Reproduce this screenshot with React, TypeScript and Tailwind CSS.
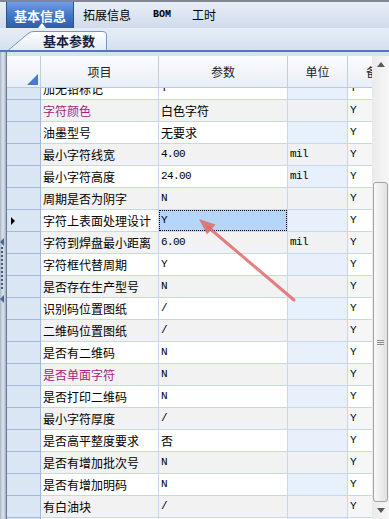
import React from "react";

type Row = { item: string; param: string; unit: string; y: string; magenta?: boolean; selected?: boolean };

const rows: Row[] = [
  { item: "加无铅标记", param: "Y", unit: "", y: "Y" },
  { item: "字符颜色", param: "白色字符", unit: "", y: "Y", magenta: true },
  { item: "油墨型号", param: "无要求", unit: "", y: "Y" },
  { item: "最小字符线宽", param: "4.00", unit: "mil", y: "Y" },
  { item: "最小字符高度", param: "24.00", unit: "mil", y: "Y" },
  { item: "周期是否为阴字", param: "N", unit: "", y: "Y" },
  { item: "字符上表面处理设计", param: "Y", unit: "", y: "Y", selected: true },
  { item: "字符到焊盘最小距离", param: "6.00", unit: "mil", y: "Y" },
  { item: "字符框代替周期", param: "Y", unit: "", y: "Y" },
  { item: "是否存在生产型号", param: "N", unit: "", y: "Y" },
  { item: "识别码位置图纸", param: "/", unit: "", y: "Y" },
  { item: "二维码位置图纸", param: "/", unit: "", y: "Y" },
  { item: "是否有二维码", param: "N", unit: "", y: "Y" },
  { item: "是否单面字符", param: "N", unit: "", y: "Y", magenta: true },
  { item: "是否打印二维码", param: "N", unit: "", y: "Y" },
  { item: "最小字符厚度", param: "/", unit: "", y: "Y" },
  { item: "是否高平整度要求", param: "否", unit: "", y: "Y" },
  { item: "是否有增加批次号", param: "N", unit: "", y: "Y" },
  { item: "是否有增加明码", param: "N", unit: "", y: "Y" },
  { item: "有白油块", param: "/", unit: "", y: "Y" },
  { item: "", param: "", unit: "", y: "" },
];

const isAscii = (s: string) => /^[\x00-\x7f]*$/.test(s);

function Val({ text }: { text: string }) {
  if (!text) return null;
  if (isAscii(text)) {
    return <span className="font-['Liberation_Mono',monospace] text-[11px] tracking-[-0.6px] text-black">{text}</span>;
  }
  return <span className="text-[12px] text-black">{text}</span>;
}

export default function App() {
  return (
    <div className="relative w-[389px] h-[519px] overflow-hidden bg-white font-['Noto_Sans_CJK_SC','Noto_Sans',sans-serif] leading-none select-none">
      {/* top tab bar */}
      <div className="h-[28px] flex items-stretch border-t-2 border-[#7f8892] bg-linear-to-b from-[#e8eef7] to-[#d0dbeb]">
        <div className="relative ml-[6px] w-[68px] flex items-center justify-center bg-linear-to-b from-[#6f9fe2] via-[#4279c6] to-[#2d5da9] border-x border-[#2a5190] text-white font-bold text-[13px]">
          基本信息
          <div className="absolute bottom-0 left-[31px] w-0 h-0 border-l-[4px] border-r-[4px] border-b-[5px] border-l-transparent border-r-transparent border-b-white" />
        </div>
        <div className="ml-[9px] self-center text-[12px] text-black">拓展信息</div>
        <div className="ml-[22px] self-center font-['Liberation_Mono',monospace] font-bold text-[10px] text-black">BOM</div>
        <div className="ml-[21px] self-center text-[12px] text-black">工时</div>
      </div>

      {/* sub tab band */}
      <div className="h-[24px] flex items-end bg-linear-to-b from-[#e6edf7] to-[#d5e0ef] border-b-2 border-[#5279b3]">
        <div className="relative ml-[8px] w-[99px] h-[19px] flex items-center pl-[35px]">
          <svg className="absolute inset-0" width="99" height="19" viewBox="0 0 99 19">
            <defs>
              <linearGradient id="tabg" x1="0" y1="0" x2="0" y2="1">
                <stop offset="0" stopColor="#ffffff" />
                <stop offset="1" stopColor="#e4ecf7" />
              </linearGradient>
            </defs>
            <path d="M0.5,19 L21,1.8 Q23,0.5 26,0.5 L95,0.5 Q98.5,0.5 98.5,4 L98.5,19" fill="url(#tabg)" stroke="#7895bf" strokeWidth="1" />
          </svg>
          <span className="relative font-bold text-[13px] text-[#14213d]">基本参数</span>
        </div>
      </div>

      {/* main */}
      <div className="h-[467px] flex">
        {/* splitter */}
        <div className="relative w-[7px] shrink-0 bg-linear-to-r from-[#aab6c6] via-[#e0e5ec] to-[#a5b2c4] border-r border-[#667b99]">
          <div className="absolute left-0 top-[186px] w-0 h-0 border-t-[4px] border-b-[4px] border-r-[4px] border-t-transparent border-b-transparent border-r-[#4a6792]" />
          <div className="absolute left-[1px] top-[195px] flex flex-col gap-[2px]">
            {Array.from({ length: 11 }).map((_, i) => (
              <div key={i} className="w-[2px] h-[2px] bg-[#3b5a88]" />
            ))}
          </div>
          <div className="absolute left-0 top-[243px] w-0 h-0 border-t-[4px] border-b-[4px] border-r-[4px] border-t-transparent border-b-transparent border-r-[#4a6792]" />
        </div>

        <div className="flex-1 flex flex-col">
          <div className="h-[4px] bg-[#d9e3f0]" />
          <div className="flex-1 flex min-h-0">
            {/* table */}
            <div className="w-[365px] flex flex-col min-h-0">
              {/* header */}
              <div className="h-[32px] flex shrink-0 border-b border-[#b9cbe4] bg-linear-to-b from-[#fbfcfe] to-[#e9eff8]">
                <div className="relative w-[34px] shrink-0 border-r border-[#c3cedd]">
                  <div className="absolute right-[2px] bottom-[2px] w-0 h-0 border-l-[11px] border-b-[11px] border-l-transparent border-b-[#4a7bc9]" />
                </div>
                <div className="w-[118px] shrink-0 border-r border-[#c3cedd] flex items-center justify-center text-[12px] text-[#222]">项目</div>
                <div className="w-[129px] shrink-0 border-r border-[#c3cedd] flex items-center justify-center text-[12px] text-[#222]">参数</div>
                <div className="w-[60px] shrink-0 border-r border-[#c3cedd] flex items-center justify-center text-[12px] text-[#222]">单位</div>
                <div className="w-[24px] shrink-0 overflow-hidden flex items-center">
                  <span className="pl-[18px] whitespace-nowrap text-[12px] text-[#222]">备注</span>
                </div>
              </div>
              {/* body */}
              <div className="flex-1 overflow-hidden">
                <div className="-mt-[10px]">
                  {rows.map((r, i) => {
                    const odd = i % 2 === 1;
                    const base = odd ? "bg-[#f2f2f2]" : "bg-white";
                    const unitBg = odd ? "bg-[#f0f1f3]" : "bg-[#e8f0fb]";
                    return (
                      <div key={i} className="h-[22px] flex">
                        <div className="w-[34px] shrink-0 bg-[#dbe6f5] border-r border-b border-[#a4b9d7] flex items-center pl-[4px]">
                          {r.selected && (
                            <div className="w-0 h-0 border-t-[4px] border-b-[4px] border-l-[4px] border-t-transparent border-b-transparent border-l-black" />
                          )}
                        </div>
                        <div className={`w-[118px] shrink-0 ${base} border-r border-b border-[#c7d7ee] flex items-center pl-[2px] overflow-hidden whitespace-nowrap`}>
                          <span className={`text-[12px] ${r.magenta ? "text-[#a5237c]" : "text-black"}`}>{r.item}</span>
                        </div>
                        <div className={`w-[129px] shrink-0 ${r.selected ? "bg-white" : base} border-r border-b border-[#c7d7ee] flex items-center overflow-hidden whitespace-nowrap`}>
                          {r.selected ? (
                            <div className="w-full h-full bg-[#b5d5f9] border border-dotted border-black flex items-center pl-[1px]">
                              <Val text={r.param} />
                            </div>
                          ) : (
                            <div className="pl-[2px] flex items-center">
                              <Val text={r.param} />
                            </div>
                          )}
                        </div>
                        <div className={`w-[60px] shrink-0 ${unitBg} border-r border-b border-[#c7d7ee] flex items-center pl-[2px]`}>
                          <Val text={r.unit} />
                        </div>
                        <div className={`w-[24px] shrink-0 ${odd ? "bg-[#f6f6f6]" : "bg-white"} border-b border-[#c7d7ee] flex items-center pl-[2px]`}>
                          <Val text={r.y} />
                        </div>
                      </div>
                    );
                  })}
                </div>
              </div>
            </div>

            {/* scrollbar */}
            <div className="w-[17px] shrink-0 flex flex-col bg-linear-to-r from-[#eaeaea] to-[#f7f7f7]">
              <div className="h-[17px] flex items-center justify-center">
                <div className="w-0 h-0 border-l-[4px] border-r-[4px] border-b-[5px] border-l-transparent border-r-transparent border-b-[#5a5a5a]" />
              </div>
              <div className="flex-1 min-h-0">
                <div className="mt-[109px] h-[320px] mx-[1px] rounded-[3px] border border-[#a3a3a3] bg-linear-to-r from-[#f8f8f8] to-[#e2e2e2] flex flex-col items-center justify-center gap-[1px]">
                  <div className="w-[7px] h-[1px] bg-[#8a8a8a]" />
                  <div className="w-[7px] h-[1px] bg-[#8a8a8a]" />
                  <div className="w-[7px] h-[1px] bg-[#8a8a8a]" />
                </div>
              </div>
              <div className="h-[17px] flex items-center justify-center">
                <div className="w-0 h-0 border-l-[4px] border-r-[4px] border-t-[5px] border-l-transparent border-r-transparent border-t-[#5a5a5a]" />
              </div>
            </div>
          </div>
        </div>
      </div>

      {/* red annotation arrow */}
      <svg className="absolute left-0 top-0 pointer-events-none" width="389" height="519" viewBox="0 0 389 519">
        <line x1="294" y1="300" x2="208" y2="227" stroke="#e26a6a" strokeWidth="3" strokeLinecap="round" opacity="0.85" />
        <polygon points="199,219 215.5,224.5 207,234.5" fill="#e26a6a" opacity="0.85" />
      </svg>
    </div>
  );
}
